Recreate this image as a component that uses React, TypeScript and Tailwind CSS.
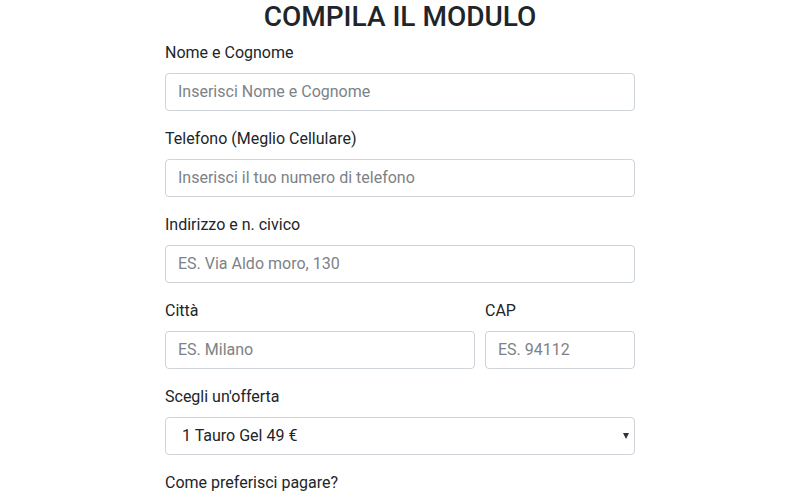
import React from "react";

const inputCls =
  "block w-full h-[38px] px-[12px] text-[16px] leading-[24px] text-[#495057] bg-white border border-[#ced4da] rounded-[4px] outline-none placeholder:text-[#7d8287]";

function Field({ label, placeholder }: { label: string; placeholder: string }) {
  return (
    <div className="mb-[16px]">
      <label className="block mb-[8px] text-[16px] leading-[24px] text-[#212529]">{label}</label>
      <input className={inputCls} placeholder={placeholder} />
    </div>
  );
}

export default function App() {
  return (
    <div
      className="min-h-[500px] bg-white"
      style={{ fontFamily: "Roboto, 'Liberation Sans', sans-serif" }}
    >
      <div className="w-[470px] mx-auto">
        <h2 className="text-center text-[28px] leading-[1.2] font-medium text-[#212529] mb-[7px]">
          COMPILA IL MODULO
        </h2>
        <Field label="Nome e Cognome" placeholder="Inserisci Nome e Cognome" />
        <Field label="Telefono (Meglio Cellulare)" placeholder="Inserisci il tuo numero di telefono" />
        <Field label="Indirizzo e n. civico" placeholder="ES. Via Aldo moro, 130" />
        <div className="flex gap-[10px]">
          <div className="w-[310px]">
            <Field label="Città" placeholder="ES. Milano" />
          </div>
          <div className="w-[150px]">
            <Field label="CAP" placeholder="ES. 94112" />
          </div>
        </div>
        <div className="mb-[16px]">
          <label className="block mb-[8px] text-[16px] leading-[24px] text-[#212529]">Scegli un'offerta</label>
          <div className="relative">
            <select
              className="block w-full h-[38px] pl-[16px] pr-[24px] text-[16px] leading-[24px] text-[#212529] bg-white border border-[#ced4da] rounded-[4px] outline-none appearance-none"
              defaultValue="1"
            >
              <option value="1">1 Tauro Gel 49 €</option>
            </select>
            <span className="pointer-events-none absolute right-[6px] top-[16px] w-0 h-0 border-l-[3px] border-r-[3px] border-t-[6px] border-l-transparent border-r-transparent border-t-[#333]" />
          </div>
        </div>
        <label className="block mb-[8px] text-[16px] leading-[24px] text-[#212529]">Come preferisci pagare?</label>
      </div>
    </div>
  );
}
